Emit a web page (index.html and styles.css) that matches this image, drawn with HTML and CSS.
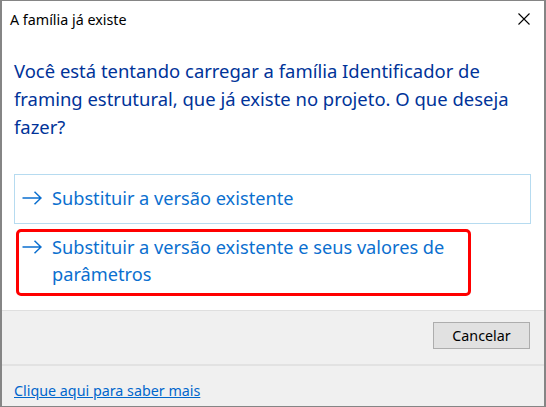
FILE: index.html
```html
<!DOCTYPE html>
<html lang="pt">
<head>
<meta charset="utf-8">
<title>A família já existe</title>
<link rel="stylesheet" href="styles.css">
</head>
<body>
<div class="dialog">
  <div class="titlebar">
    <span class="title">A família já existe</span>
    <svg class="close" width="12" height="12" viewBox="0 0 12 12" aria-label="Fechar">
      <path d="M0.5 0.5 L11.5 11.5 M11.5 0.5 L0.5 11.5" stroke="#000" stroke-width="1.1" fill="none"/>
    </svg>
  </div>
  <div class="content">
    <p class="instruction">Você está tentando carregar a família Identificador de framing estrutural, que já existe no projeto. O que deseja fazer?</p>
    <a class="cmd cmd-focused" href="#">
      <svg class="arrow" width="20" height="14" viewBox="0 0 20 14"><path d="M0.5 7 H19 M12.5 0.8 L19 7 L12.5 13.2" stroke="currentColor" stroke-width="1.5" fill="none"/></svg>
      <span class="cmd-text">Substituir a versão existente</span>
    </a>
    <a class="cmd cmd-marked" href="#">
      <svg class="arrow" width="20" height="14" viewBox="0 0 20 14"><path d="M0.5 7 H19 M12.5 0.8 L19 7 L12.5 13.2" stroke="currentColor" stroke-width="1.5" fill="none"/></svg>
      <span class="cmd-text">Substituir a versão existente e seus valores de parâmetros</span>
    </a>
  </div>
  <div class="buttons">
    <button class="btn" type="button">Cancelar</button>
  </div>
  <div class="footer">
    <a class="more" href="#">Clique aqui para saber mais</a>
  </div>
</div>
</body>
</html>
```
FILE: styles.css
```css
html, body {
  margin: 0;
  padding: 0;
  background: #ffffff;
}

.dialog {
  box-sizing: border-box;
  width: 546px;
  height: 407px;
  border-style: solid;
  border-color: #858585;
  border-width: 1px 2px 1px 2px;
  display: flex;
  flex-direction: column;
  font-family: "Noto Sans", "Open Sans", sans-serif;
  background: #f0f0f0;
}

.titlebar {
  box-sizing: border-box;
  height: 39px;
  padding: 9px 14px 0 8px;
  display: flex;
  justify-content: space-between;
  align-items: flex-start;
  background: #ffffff;
}

.title {
  font-size: 14.3px;
  line-height: 20px;
  color: #000000;
}

.close {
  margin-top: 3px;
  display: block;
}

.content {
  background: #ffffff;
  padding: 17px 13px 14px 12px;
  display: flex;
  flex-direction: column;
  align-items: flex-start;
}

.instruction {
  margin: 0 0 33px 0;
  font-size: 18.45px;
  line-height: 28px;
  color: #003399;
}

.cmd {
  box-sizing: border-box;
  display: flex;
  align-items: flex-start;
  text-decoration: none;
  color: #0b6fcf;
  font-size: 18.2px;
  line-height: 27px;
}

.arrow {
  display: block;
  flex: none;
  margin-top: 6px;
  margin-right: 10px;
}

.cmd-focused {
  width: 100%;
  height: 50px;
  border: 1px solid #b6dbf0;
  padding: 10px 7px 0 7px;
}

.cmd-marked {
  width: 455px;
  margin: 5px 0 0 2px;
  border: 3px solid #ff0000;
  border-radius: 5px;
  padding: 2px 4px 5px 3px;
}

.buttons {
  border-top: 1px solid #dfdfdf;
  padding: 11px 14px 15px 0;
  display: flex;
  justify-content: flex-end;
}

.btn {
  box-sizing: border-box;
  width: 97px;
  height: 27px;
  margin: 0;
  padding: 0;
  background: #e1e1e1;
  border: 1px solid #adadad;
  font-family: "Noto Sans", "Open Sans", sans-serif;
  font-size: 14.3px;
  line-height: 20px;
  color: #000000;
}

.footer {
  flex: 1;
  border-top: 2px solid #e2e2e2;
  padding: 13px 12px 0 12px;
}

.more {
  font-size: 14.3px;
  line-height: 20px;
  color: #0066cc;
  text-decoration: underline;
}
```
